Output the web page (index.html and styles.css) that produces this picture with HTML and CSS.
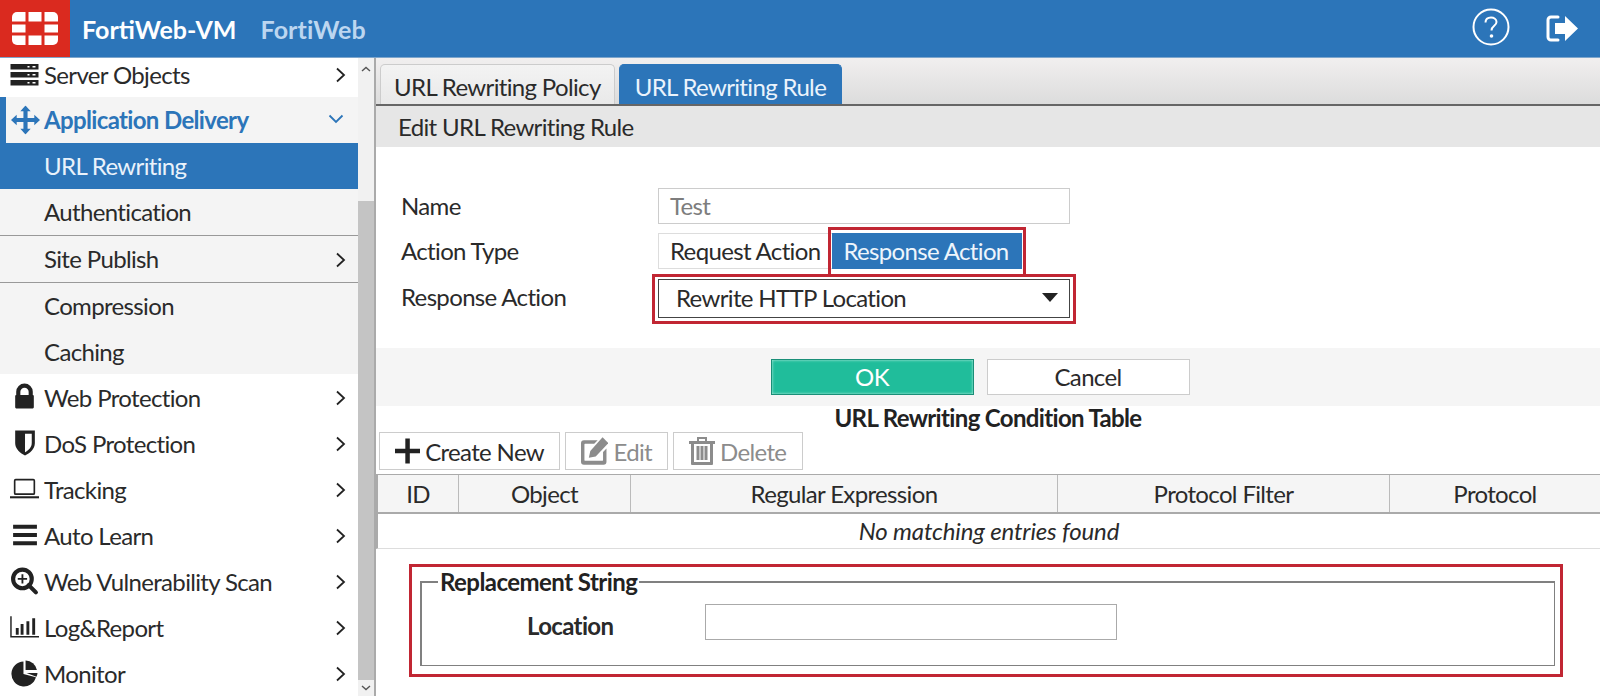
FILE: index.html
```html
<!DOCTYPE html>
<html lang="en">
<head>
<meta charset="utf-8">
<title>FortiWeb-VM</title>
<link rel="stylesheet" href="styles.css">
</head>
<body>
<header class="topbar">
  <div class="logo">
    <svg width="46" height="33" viewBox="0 0 46 33" fill="#fff"><path d="M5 0H13.500V9.500H0V5A5 5 0 0 1 5 0Z"/><rect x="16.500" width="13" height="9.500"/><path d="M32.500 0H41A5 5 0 0 1 46 5V9.500H32.500Z"/><rect y="12.500" width="13.500" height="8"/><rect x="32.500" y="12.500" width="13.500" height="8"/><path d="M0 23.500H13.500V33H5A5 5 0 0 1 0 28Z"/><rect x="16.500" y="23.500" width="13" height="9.500"/><path d="M32.500 23.500H46V28A5 5 0 0 1 41 33H32.500Z"/></svg>
  </div>
  <span class="brand">FortiWeb-VM</span>
  <span class="product">FortiWeb</span>
  <div class="top-actions">
    <svg width="38" height="38" viewBox="0 0 38 38" fill="none" stroke="#fff" stroke-width="2"><circle cx="19" cy="19" r="17.500"/><path d="M13.500 14.500C13.500 11 16 9.500 19 9.500C22 9.500 24.500 11.200 24.500 14C24.500 18 19.500 17.500 19.500 22.500"/><circle cx="19.500" cy="28" r="1.800" fill="#fff" stroke="none"/></svg>
    <svg class="logout" width="33" height="27" viewBox="0 0 33 27" fill="#fff"><path d="M12 2H5A3 3 0 0 0 2 5V22A3 3 0 0 0 5 25H12" fill="none" stroke="#fff" stroke-width="3" stroke-linecap="round"/><path d="M9 8H19V1L32 13.500L19 26V19H9Z"/></svg>
  </div>
</header>
<div class="layout">
  <aside class="sidebar">
    <nav class="menu">
      <a class="item first"><svg class="ico" viewBox="0 0 28 22"><path d="M0 0H28V5.500H0ZM0 8H28V13.500H0ZM0 16H28V21.500H0Z" fill="#222"/><path d="M17 2.800H19M22 2.800H25M17 10.800H19M22 10.800H25M17 18.800H19M22 18.800H25" stroke="#fff" stroke-width="1.500"/></svg><span class="label">Server Objects</span><svg class="chev" viewBox="0 0 10 16"><path d="M1.500 1.500L8.500 8L1.500 14.500"/></svg></a>
      <a class="item open"><svg class="ico" viewBox="0 0 28 28" fill="#2c75b9"><path d="M14 0L19 5.500H16V12H22.500V9L28 14L22.500 19V16H16V22.500H19L14 28L9 22.500H12V16H5.500V19L0 14L5.500 9V12H12V5.500H9Z"/></svg><span class="label">Application Delivery</span><svg class="chev down" viewBox="0 0 16 10"><path d="M1.500 1.500L8 8L14.500 1.500"/></svg></a>
      <a class="item sub active"><span class="label">URL Rewriting</span></a>
      <a class="item sub"><span class="label">Authentication</span></a>
      <a class="item sub lined"><span class="label">Site Publish</span><svg class="chev" viewBox="0 0 10 16"><path d="M1.500 1.500L8.500 8L1.500 14.500"/></svg></a>
      <a class="item sub"><span class="label">Compression</span></a>
      <a class="item sub"><span class="label">Caching</span></a>
      <a class="item top"><svg class="ico" viewBox="0 0 28 28"><path d="M6 12V9A8 8 0 0 1 22 9V12M10 12V9A4 4 0 0 1 18 9V12Z" fill="#222" fill-rule="evenodd"/><rect x="5" y="12" width="18" height="13" rx="1" fill="#222"/></svg><span class="label">Web Protection</span><svg class="chev" viewBox="0 0 10 16"><path d="M1.500 1.500L8.500 8L1.500 14.500"/></svg></a>
      <a class="item top"><svg class="ico" viewBox="0 0 28 28"><path d="M5 2H24V14C24 20 19 24 14.500 26C10 24 5 20 5 14Z" fill="#222"/><path d="M14.500 5H21V14C21 18 18 21 14.500 23Z" fill="#fff"/></svg><span class="label">DoS Protection</span><svg class="chev" viewBox="0 0 10 16"><path d="M1.500 1.500L8.500 8L1.500 14.500"/></svg></a>
      <a class="item top"><svg class="ico" viewBox="0 0 28 28"><rect x="4.500" y="5" width="19" height="14" rx="1" fill="none" stroke="#222" stroke-width="1.600"/><rect y="21" width="28" height="2" fill="#222"/></svg><span class="label">Tracking</span><svg class="chev" viewBox="0 0 10 16"><path d="M1.500 1.500L8.500 8L1.500 14.500"/></svg></a>
      <a class="item top"><svg class="ico" viewBox="0 0 28 28"><path d="M3 4H26V8H3ZM3 12H26V16H3ZM3 20H26V24H3Z" fill="#222"/></svg><span class="label">Auto Learn</span><svg class="chev" viewBox="0 0 10 16"><path d="M1.500 1.500L8.500 8L1.500 14.500"/></svg></a>
      <a class="item top"><svg class="ico" viewBox="0 0 28 28"><circle cx="12" cy="12" r="9" fill="none" stroke="#222" stroke-width="4"/><path d="M18 18L25 25" stroke="#222" stroke-width="4" stroke-linecap="round"/><path d="M12 7.500V16.500M7.500 12H16.500" stroke="#222" stroke-width="1.800"/></svg><span class="label">Web Vulnerability Scan</span><svg class="chev" viewBox="0 0 10 16"><path d="M1.500 1.500L8.500 8L1.500 14.500"/></svg></a>
      <a class="item top"><svg class="ico" viewBox="0 0 30 28"><path d="M1 3V24H30" fill="none" stroke="#222" stroke-width="1.500"/><path d="M6 15H9V22H6ZM11 11H14V22H11ZM17 8H20V22H17ZM23 5H26V22H23Z" fill="#222"/></svg><span class="label">Log&amp;Report</span><svg class="chev" viewBox="0 0 10 16"><path d="M1.500 1.500L8.500 8L1.500 14.500"/></svg></a>
      <a class="item top"><svg class="ico" viewBox="0 0 28 28"><path d="M13 3A12 12 0 1 0 25 18L13 15Z" fill="#222"/><path d="M15 2A11 11 0 0 1 26 11H15Z" fill="#222"/><path d="M16 14H26.500C26.500 15 26 17 25.500 17.500Z" fill="#222"/></svg><span class="label">Monitor</span><svg class="chev" viewBox="0 0 10 16"><path d="M1.500 1.500L8.500 8L1.500 14.500"/></svg></a>
    </nav>
    <div class="scroll">
      <svg class="arrow" viewBox="0 0 10 6"><path d="M1 5L5 1.500L9 5"/></svg>
      <div class="thumb"></div>
      <svg class="arrow end" viewBox="0 0 10 6"><path d="M1 1L5 4.500L9 1"/></svg>
    </div>
  </aside>
  <main class="main">
    <div class="tabs">
      <a class="tab">URL Rewriting Policy</a>
      <a class="tab current">URL Rewriting Rule</a>
    </div>
    <div class="title">Edit URL Rewriting Rule</div>
    <form class="form">
      <div class="row"><span class="field-label">Name</span><div class="input muted">Test</div></div>
      <div class="row"><span class="field-label">Action Type</span><div class="toggle"><span class="opt">Request Action</span><span class="opt on hl">Response Action</span></div></div>
      <div class="row select-row"><span class="field-label">Response Action</span><div class="select hl"><span>Rewrite HTTP Location</span><i class="caret"></i></div></div>
    </form>
    <div class="buttons"><a class="btn ok">OK</a><a class="btn">Cancel</a></div>
    <div class="table-title">URL Rewriting Condition Table</div>
    <div class="toolbar">
      <a class="tool create"><svg width="28" height="28" viewBox="0 0 28 28" fill="#222"><path d="M11.500 0H16.500V11.500H28V16.500H16.500V28H11.500V16.500H0V11.500H11.500Z"/></svg>Create New</a>
      <a class="tool edit"><svg width="28" height="28" viewBox="0 0 28 28" fill="#8c8c8c"><path d="M3 3H17L13.500 6.500H4A.5 .5 0 0 0 3.500 7V23.500A.5 .5 0 0 0 4 24H22A.5 .5 0 0 0 22.500 23.500V15L26 11.500V25A3 3 0 0 1 23 28H3A3 3 0 0 1 0 25V6A3 3 0 0 1 3 3Z"/><path d="M22 0L28 6L15 19.500L8 21L9.500 14Z"/></svg>Edit</a>
      <a class="tool del"><svg width="26" height="28" viewBox="0 0 26 28" fill="#8c8c8c"><path d="M8 0H18V4H26V7H24V27A1 1 0 0 1 23 28H3A1 1 0 0 1 2 27V7H0V4H8ZM10 2V4H16V2ZM5 7V25H21V7Z" fill-rule="evenodd"/><path d="M7.500 9H10.500V23H7.500ZM11.500 9H14.500V23H11.500ZM15.500 9H18.500V23H15.500Z"/></svg>Delete</a>
    </div>
    <div class="table">
      <div class="thead">
        <span class="c-id">ID</span><span class="c-obj">Object</span><span class="c-re">Regular Expression</span><span class="c-pf">Protocol Filter</span><span class="c-p">Protocol</span>
      </div>
      <div class="empty">No matching entries found</div>
    </div>
    <section class="replace">
      <fieldset class="fs">
        <legend class="legend">Replacement String</legend>
        <div class="fs-row"><span class="loc-label">Location</span><div class="input loc"></div></div>
      </fieldset>
    </section>
  </main>
</div>
</body>
</html>
```
FILE: styles.css
```css
* { box-sizing: border-box; }
html, body { margin: 0; height: 100%; overflow: hidden; }
body { font-family: Lato, "Open Sans", sans-serif; font-size: 24px; letter-spacing: -0.65px; color: #2a2a2a; background: #fff; }
.topbar { height: 58px; background: #2c75b9; border-bottom: 1px solid #7ea6cc; display: flex; align-items: center; }
.logo { width: 70px; height: 57px; background: #da2a1f; display: flex; align-items: center; justify-content: center; flex: none; }
.brand { margin-left: 12px; color: #fff; font-weight: 700; font-size: 25px; letter-spacing: 0; }
.product { margin-left: 24px; color: #bcd6f0; font-weight: 700; font-size: 25px; letter-spacing: 0.1px; }
.top-actions { margin-left: auto; margin-right: 21px; margin-bottom: 3px; display: flex; align-items: center; gap: 36px; }
.logout { margin-top: 3px; }
.layout { display: flex; height: 638px; }
.sidebar { width: 376px; flex: none; display: flex; border-right: 2px solid #aaa; background: #fff; }
.menu { width: 358px; flex: none; display: flex; flex-direction: column; }
.item { height: 46px; display: flex; align-items: center; position: relative; padding-left: 44px; color: #2a2a2a; }
.item.first { height: 39px; padding-bottom: 5px; }
.ico { position: absolute; left: 10px; top: 50%; width: 29px; height: 29px; transform: translateY(-50%); }
.first .ico { height: 22px; top: 17px; }
.label { line-height: 1; }
.top .label { padding-top: 2px; }
.chev { position: absolute; right: 12px; top: 50%; width: 11px; height: 16px; margin-top: -7px; fill: none; stroke: #222; stroke-width: 1.800; }
.first .chev { margin-top: -10px; }
.chev.down { width: 16px; height: 10px; right: 14px; margin-top: -6px; stroke: #2c75b9; }
.open { background: #f4f4f4; border-left: 6px solid #2c75b9; padding-left: 38px; color: #2c75b9; font-weight: 700; }
.open .ico { left: 5px; }
.sub { background: #f4f4f4; }
.lined { border-top: 1px solid #999; border-bottom: 1px solid #999; height: 48px; }
.active { background: #2c75b9; color: #e9f2fb; }
.scroll { flex: 1; background: #f1f1f1; display: flex; flex-direction: column; align-items: center; }
.arrow { width: 10px; height: 6px; margin: 8px 0; fill: none; stroke: #555; stroke-width: 1.400; flex: none; }
.arrow.end { margin: 5px 0; }
.thumb { width: 16px; margin-top: 121px; flex: 1; background: #c4c4c4; }
.main { flex: 1; min-width: 0; display: flex; flex-direction: column; }
.tabs { height: 48px; padding: 6px 0 0 4px; display: flex; gap: 4px; background: linear-gradient(#f1efef, #dcdcdc); border-bottom: 2px solid #666; }
.tab { height: 40px; padding: 4px 13px 0; display: flex; align-items: center; border: 1px solid #ccc; border-bottom: 0; border-radius: 5px 5px 0 0; background: linear-gradient(#f3f3f3, #e9e9e9); }
.tab.current { background: #2c75b9; border-color: #2c75b9; color: #eaf3fc; padding: 4px 15px 0; }
.title { height: 41px; padding-left: 22px; display: flex; align-items: center; background: #e6e6e6; }
.form { height: 201px; padding-top: 41px; display: flex; flex-direction: column; gap: 9px; }
.row { display: flex; align-items: center; padding-left: 25px; height: 36px; }
.select-row { height: 39px; margin-top: 1px; }
.field-label { width: 257px; flex: none; padding-bottom: 2px; }
.select-row .field-label { padding-bottom: 4px; }
.input { width: 412px; height: 36px; border: 1px solid #ccc; padding: 0 0 2px 11px; display: flex; align-items: center; }
.muted { color: #7d7d7d; }
.toggle { display: flex; height: 36px; align-items: stretch; }
.opt { padding: 0 12px 2px 11px; display: flex; align-items: center; position: relative; border: 1px solid #ddd; border-right: 0; }
.opt.on { background: #2c75b9; color: #eef5fc; padding: 0 13px 2px 11px; border: 0; }
.select { width: 412px; height: 39px; border: 1px solid #444; padding: 0 11px 2px 17px; display: flex; align-items: center; justify-content: space-between; position: relative; }
.caret { width: 0; height: 0; border: 8px solid transparent; border-top: 9px solid #222; border-bottom: 0; }
.hl::after { content: ""; position: absolute; inset: -6px -7px -7px -7px; border: 3px solid #c12633; pointer-events: none; }
.opt.hl::after { inset: -6px -4px -8px -4px; }
.buttons { height: 58px; background: #f5f5f5; display: flex; justify-content: center; align-items: center; gap: 13px; padding-right: 16px; }
.btn { width: 203px; height: 36px; padding-bottom: 1px; background: #fff; border: 1px solid #ccc; display: flex; align-items: center; justify-content: center; }
.btn.ok { background: #20bd9b; border-color: #1a8f78; color: #fff; box-shadow: inset 0 0 3px #bfeee2; }
.table-title { height: 26px; line-height: 24px; text-align: center; font-weight: 700; color: #222; }
.toolbar { height: 42px; display: flex; gap: 5px; padding-left: 3px; }
.tool { height: 38px; border: 1px solid #ccc; display: flex; align-items: center; gap: 5px; padding: 0 15px; color: #2a2a2a; white-space: nowrap; }
.tool.edit, .tool.del { color: #8c8c8c; gap: 5px; }
.create { width: 181px; }
.edit { width: 103px; }
.del { width: 130px; }
.table { display: flex; flex-direction: column; }
.thead { height: 40px; display: flex; background: #f5f5f5; border-top: 1px solid #aaa; border-bottom: 2px solid #aaa; border-left: 2px solid #aaa; }
.thead span { display: flex; align-items: center; justify-content: center; border-right: 1px solid #bbb; }
.thead span:last-child { border-right: 0; }
.c-id { width: 81px; }
.c-obj { width: 172px; }
.c-re { width: 427px; }
.c-pf { width: 332px; }
.c-p { flex: 1; }
.empty { height: 35px; padding-bottom: 2px; display: flex; align-items: center; justify-content: center; font-style: italic; letter-spacing: -0.15px; border-left: 2px solid #aaa; border-bottom: 1px solid #ddd; }
.replace { margin: 15px 37px 0 33px; height: 113px; border: 3px solid #c12633; padding: 2px 5px 0 8px; }
.fs { margin: 0; padding: 0 0 0 16px; height: 97px; border: 2px solid #808080; border-width: 2px 1px 1px 2px; display: block; }
.legend { padding: 0 2px; font-weight: 700; line-height: 26px; color: #222; letter-spacing: -0.55px; }
.fs-row { display: flex; align-items: flex-start; padding-top: 9px; }
.loc-label { font-weight: 700; width: 267px; padding-left: 89px; flex: none; line-height: 36px; margin-top: 4px; }
.loc { border-color: #aaa; height: 36px; }
```
